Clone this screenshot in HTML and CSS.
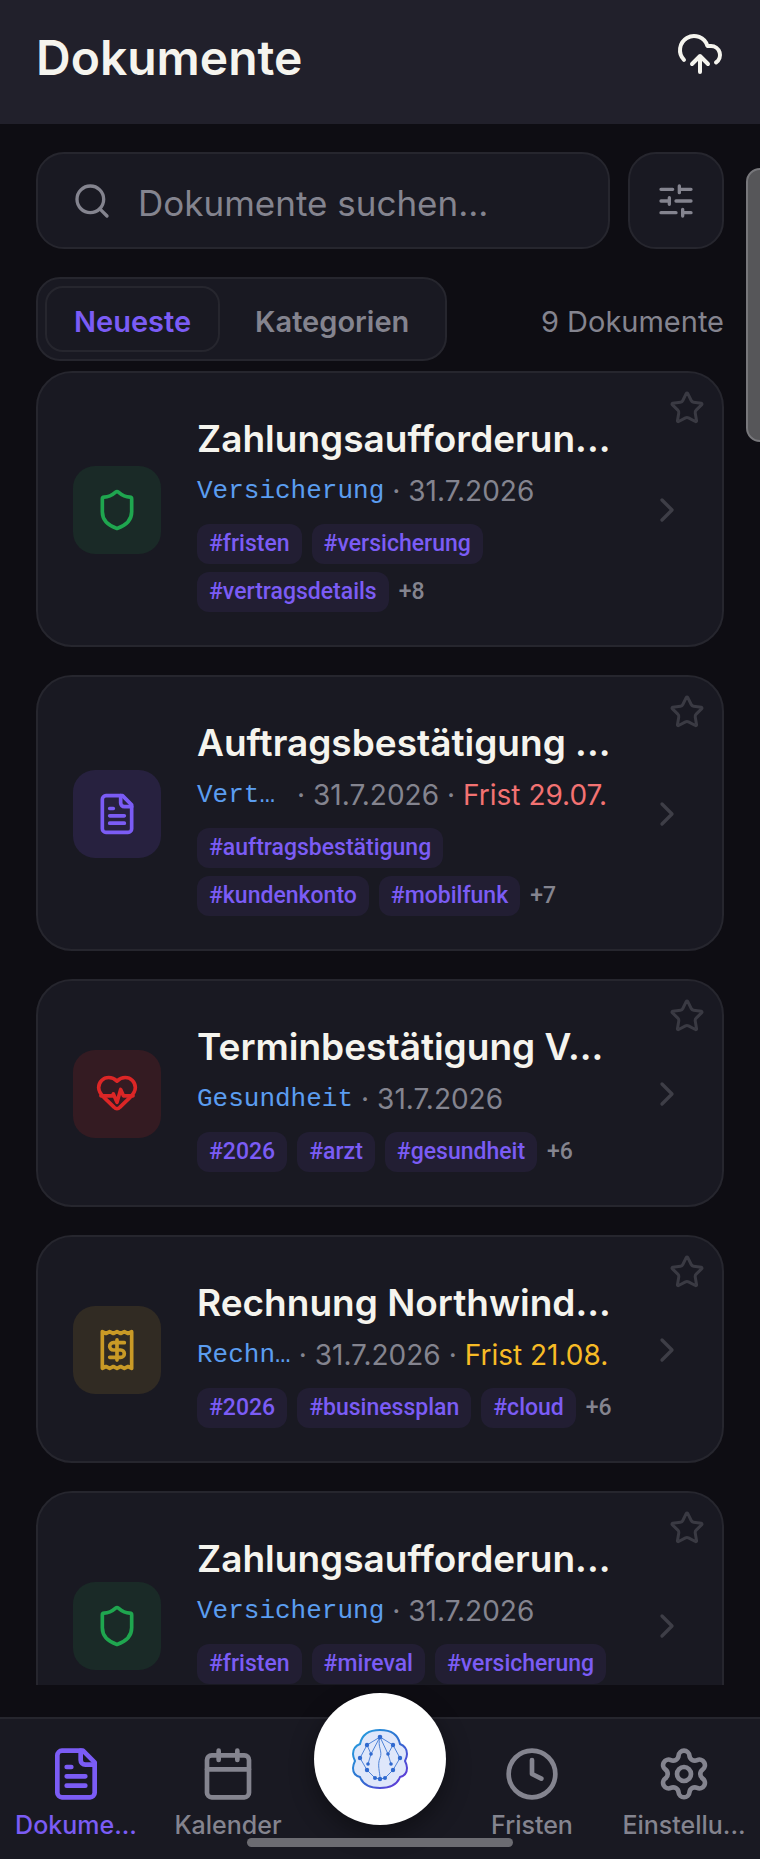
FILE: index.html
```html
<!DOCTYPE html>
<html lang="de">

<head>
  <meta charset="utf-8">
  <meta name="viewport" content="width=device-width, initial-scale=1">
  <title>Dokumente</title>
  <link rel="stylesheet" href="styles.css">
</head>

<body>
  <!-- shared icons -->
  <svg class="sprite" aria-hidden="true">
    <symbol id="star" viewBox="0 0 24 24">
      <path d="M11.525 2.295a.53.53 0 0 1 .95 0l2.31 4.679a2.123 2.123 0 0 0 1.595 1.16l5.166.756a.53.53 0 0 1 .294.904l-3.736 3.638a2.123 2.123 0 0 0-.611 1.878l.882 5.14a.53.53 0 0 1-.771.56l-4.618-2.428a2.122 2.122 0 0 0-1.973 0L6.396 21.01a.53.53 0 0 1-.77-.56l.881-5.139a2.122 2.122 0 0 0-.611-1.879L2.16 9.795a.53.53 0 0 1 .294-.906l5.165-.755a2.122 2.122 0 0 0 1.597-1.16z" />
    </symbol>
    <symbol id="chevron" viewBox="0 0 24 24">
      <path d="m9 18 6-6-6-6" />
    </symbol>
    <symbol id="shield" viewBox="0 0 24 24">
      <path d="M20 13c0 5-3.5 7.5-7.66 8.95a1 1 0 0 1-.67-.01C7.5 20.5 4 18 4 13V6a1 1 0 0 1 1-1c2 0 4.500-1.200 6.240-2.720a1.170 1.170 0 0 1 1.520 0C14.510 3.810 17 5 19 5a1 1 0 0 1 1 1z" />
    </symbol>
    <symbol id="file" viewBox="0 0 24 24">
      <path d="M15 2H6a2 2 0 0 0-2 2v16a2 2 0 0 0 2 2h12a2 2 0 0 0 2-2V7Z" />
      <path d="M14 2v4a2 2 0 0 0 2 2h4M10 9H8M16 13H8M16 17H8" />
    </symbol>
  </svg>

  <header class="topbar">
    <h1>Dokumente</h1>
    <button class="upload" type="button" aria-label="Hochladen">
      <svg class="icon" viewBox="0 0 24 24">
        <path d="M12 13v8M4 14.899A7 7 0 1 1 15.710 8h1.790a4.500 4.500 0 0 1 2.500 8.242M8 17l4-4 4 4" />
      </svg>
    </button>
  </header>

  <main>
    <div class="search-row">
      <label class="search" for="search">
        <svg class="icon" viewBox="0 0 24 24">
          <circle cx="11" cy="11" r="8" />
          <path d="m21 21-4.300-4.300" />
        </svg>
        <input id="search" type="text" placeholder="Dokumente suchen..." aria-label="Dokumente suchen">
      </label>
      <button class="filter" type="button" aria-label="Filter">
        <svg class="icon" viewBox="0 0 24 24">
          <path d="M21 5h-7M10 5H3M21 12h-9M8 12H3M21 19h-5M12 19H3M14 3v4M8 10v4M16 17v4" />
        </svg>
      </button>
    </div>

    <div class="view-row">
      <div class="tabs">
        <button class="tab active" type="button">Neueste</button>
        <button class="tab" type="button">Kategorien</button>
      </div>
      <span class="count">9 Dokumente</span>
    </div>

    <div class="list">
      <article class="card">
        <div class="tile green"><svg class="icon"><use href="#shield" /></svg></div>
        <div class="info">
          <h2>Zahlungsaufforderun...</h2>
          <div class="meta">
            <span class="category">Versicherung</span><span>·</span><span>31.7.2026</span>
          </div>
          <div class="tags">
            <span class="tag">#fristen</span>
            <span class="tag">#versicherung</span>
            <span class="tag">#vertragsdetails</span>
            <span class="more">+8</span>
          </div>
        </div>
        <svg class="icon chevron"><use href="#chevron" /></svg>
        <button class="star" type="button" aria-label="Favorit"><svg class="icon"><use href="#star" /></svg></button>
      </article>

      <article class="card">
        <div class="tile purple"><svg class="icon"><use href="#file" /></svg></div>
        <div class="info">
          <h2>Auftragsbestätigung ...</h2>
          <div class="meta">
            <span class="category">Vert…</span><span>·</span><span>31.7.2026</span><span>·</span><span class="overdue">Frist 29.07.</span>
          </div>
          <div class="tags">
            <span class="tag">#auftragsbestätigung</span>
            <span class="tag">#kundenkonto</span>
            <span class="tag">#mobilfunk</span>
            <span class="more">+7</span>
          </div>
        </div>
        <svg class="icon chevron"><use href="#chevron" /></svg>
        <button class="star" type="button" aria-label="Favorit"><svg class="icon"><use href="#star" /></svg></button>
      </article>

      <article class="card">
        <div class="tile red">
          <svg class="icon" viewBox="0 0 24 24">
            <path d="M19 14c1.490-1.460 3-3.210 3-5.500A5.500 5.500 0 0 0 16.500 3c-1.760 0-3 .5-4.500 2-1.500-1.500-2.740-2-4.500-2A5.500 5.500 0 0 0 2 8.500c0 2.300 1.500 4.050 3 5.500l5.500 5.300a2 2 0 0 0 3 0Z" />
            <path d="M3.220 13H9.500l.5-1 2 4.500 2-7 1.500 3.500h5.270" />
          </svg>
        </div>
        <div class="info">
          <h2>Terminbestätigung V...</h2>
          <div class="meta">
            <span class="category">Gesundheit</span><span>·</span><span>31.7.2026</span>
          </div>
          <div class="tags">
            <span class="tag">#2026</span>
            <span class="tag">#arzt</span>
            <span class="tag">#gesundheit</span>
            <span class="more">+6</span>
          </div>
        </div>
        <svg class="icon chevron"><use href="#chevron" /></svg>
        <button class="star" type="button" aria-label="Favorit"><svg class="icon"><use href="#star" /></svg></button>
      </article>

      <article class="card">
        <div class="tile yellow">
          <svg class="icon" viewBox="0 0 24 24">
            <path d="M4 2v20l2-1 2 1 2-1 2 1 2-1 2 1 2-1 2 1V2l-2 1-2-1-2 1-2-1-2 1-2-1-2 1Z" />
            <path d="M16 8h-6a2 2 0 1 0 0 4h4a2 2 0 1 1 0 4H8M12 17.500v-11" />
          </svg>
        </div>
        <div class="info">
          <h2>Rechnung Northwind...</h2>
          <div class="meta">
            <span class="category">Rechn…</span><span>·</span><span>31.7.2026</span><span>·</span><span class="due">Frist 21.08.</span>
          </div>
          <div class="tags">
            <span class="tag">#2026</span>
            <span class="tag">#businessplan</span>
            <span class="tag">#cloud</span>
            <span class="more">+6</span>
          </div>
        </div>
        <svg class="icon chevron"><use href="#chevron" /></svg>
        <button class="star" type="button" aria-label="Favorit"><svg class="icon"><use href="#star" /></svg></button>
      </article>

      <article class="card">
        <div class="tile green"><svg class="icon"><use href="#shield" /></svg></div>
        <div class="info">
          <h2>Zahlungsaufforderun...</h2>
          <div class="meta">
            <span class="category">Versicherung</span><span>·</span><span>31.7.2026</span>
          </div>
          <div class="tags">
            <span class="tag">#fristen</span>
            <span class="tag">#mireval</span>
            <span class="tag">#versicherung</span>
            <span class="more">+8</span>
          </div>
        </div>
        <svg class="icon chevron"><use href="#chevron" /></svg>
        <button class="star" type="button" aria-label="Favorit"><svg class="icon"><use href="#star" /></svg></button>
      </article>
    </div>
  </main>

  <nav class="bottom-nav">
    <a class="active" href="#dokumente">
      <svg class="icon"><use href="#file" /></svg>
      <span>Dokume...</span>
    </a>
    <a href="#kalender">
      <svg class="icon" viewBox="0 0 24 24">
        <path d="M8 2v4M16 2v4M3 10h18" />
        <rect x="3" y="4" width="18" height="18" rx="2" />
      </svg>
      <span>Kalender</span>
    </a>
    <button class="assistant" type="button" aria-label="Assistent">
      <svg viewBox="0 0 56 60">
        <defs>
          <linearGradient id="brain" x1="0" y1="0" x2="1" y2="1">
            <stop offset="0" stop-color="#25a5e0" />
            <stop offset="0.5" stop-color="#2f6fd0" />
            <stop offset="1" stop-color="#6a2fd8" />
          </linearGradient>
        </defs>
        <path d="M8 15C10 5 18 1 28 1s18 4 20 14c5 2 7 6 7 10 0 3-1 5-2 7 1 2 2 4 2 7 0 5-3 8-7 9-3 8-10 11-20 11S11 56 8 48c-4-1-7-4-7-9 0-3 1-5 2-7-1-2-2-4-2-7 0-4 2-8 7-10Z" fill="#dfe7fa" stroke="url(#brain)" stroke-width="2" />
        <path d="M28 8 15 16 8 29 15 41 23 49 28 50 33 49 41 41 48 29 41 16 28 8 19 25 16 35M15 16l4 9M28 8l8 17 3 10M41 16l-5 9M28 8c-3 10 3 14 0 21s0 14 0 21" fill="none" stroke="#5084d8" stroke-width="1" />
        <g fill="#2f69cf">
          <circle cx="28" cy="8" r="2.300" />
          <circle cx="15" cy="16" r="2.200" />
          <circle cx="41" cy="16" r="2.200" />
          <circle cx="19" cy="25" r="1.800" />
          <circle cx="36" cy="25" r="1.800" />
          <circle cx="8" cy="29" r="2.200" />
          <circle cx="48" cy="29" r="2.200" />
          <circle cx="16" cy="35" r="1.800" />
          <circle cx="39" cy="35" r="1.800" />
          <circle cx="15" cy="41" r="2.200" />
          <circle cx="41" cy="41" r="2.200" />
          <circle cx="23" cy="49" r="2" />
          <circle cx="28" cy="50" r="2.200" />
          <circle cx="33" cy="49" r="2" />
        </g>
      </svg>
    </button>
    <a href="#fristen">
      <svg class="icon" viewBox="0 0 24 24">
        <circle cx="12" cy="12" r="10" />
        <path d="M12 6v6l4 2" />
      </svg>
      <span>Fristen</span>
    </a>
    <a href="#einstellungen">
      <svg class="icon" viewBox="0 0 24 24">
        <path d="M9.671 4.136a2.340 2.340 0 0 1 4.659 0 2.340 2.340 0 0 0 3.319 1.915 2.340 2.340 0 0 1 2.330 4.033 2.340 2.340 0 0 0 0 3.831 2.340 2.340 0 0 1-2.330 4.033 2.340 2.340 0 0 0-3.319 1.915 2.340 2.340 0 0 1-4.659 0 2.340 2.340 0 0 0-3.320-1.915 2.340 2.340 0 0 1-2.330-4.033 2.340 2.340 0 0 0 0-3.831A2.340 2.340 0 0 1 6.350 6.051a2.340 2.340 0 0 0 3.319-1.915" />
        <circle cx="12" cy="12" r="3" />
      </svg>
      <span>Einstellu...</span>
    </a>
  </nav>

  <div class="scroll-thumb"></div>
  <div class="home-bar"></div>
</body>

</html>
```

FILE: styles.css
```css
* {
  box-sizing: border-box;
}

body {
  margin: 0;
  height: 100vh;
  display: flex;
  flex-direction: column;
  position: relative;
  overflow: hidden;
  background-color: #0e0d13;
  color: #f5f4ee;
  font-family: Inter, "Open Sans", sans-serif;
}

h1,
h2 {
  margin: 0;
  white-space: nowrap;
}

button {
  margin: 0;
  padding: 0;
  border: none;
  background: none;
  color: inherit;
  font-family: inherit;
  cursor: pointer;
}

.sprite {
  position: absolute;
  width: 0;
  height: 0;
}

.icon {
  display: block;
  flex: none;
  width: 40px;
  height: 40px;
  fill: none;
  stroke: currentColor;
  stroke-width: 2;
  stroke-linecap: round;
  stroke-linejoin: round;
}

/* header */
.topbar {
  flex: none;
  display: flex;
  justify-content: space-between;
  align-items: center;
  height: 124px;
  padding: 0 36px 16px;
  background-color: #21202b;
}

.topbar h1 {
  padding-top: 8px;
  font-size: 48px;
  line-height: 56px;
  font-weight: 600;
}

.upload .icon {
  width: 48px;
  height: 48px;
}

main {
  flex: 1;
  min-height: 0;
  display: flex;
  flex-direction: column;
  padding: 28px 36px 32px;
}

/* search */
.search-row {
  flex: none;
  display: flex;
  gap: 18px;
}

.search,
.filter,
.tabs,
.card {
  background-color: #191922;
  border: 2px solid #26262e;
}

.search {
  flex: 1;
  min-width: 0;
  display: flex;
  align-items: center;
  gap: 26px;
  height: 97px;
  padding: 0 34px;
  border-radius: 28px;
  color: #84848f;
}

.search input {
  flex: 1;
  min-width: 0;
  padding: 4px 0 0;
  border: none;
  outline: none;
  background: none;
  color: #f5f4ee;
  font-family: inherit;
  font-size: 35px;
  line-height: 44px;
}

.search input::placeholder {
  color: #84848f;
  opacity: 1;
}

.filter {
  display: flex;
  justify-content: center;
  align-items: center;
  width: 96px;
  border-radius: 28px;
  color: #84848f;
}

/* tabs */
.view-row {
  flex: none;
  display: flex;
  justify-content: space-between;
  align-items: center;
  margin: 28px 0 10px;
}

.tabs {
  display: flex;
  gap: 6px;
  padding: 7px;
  border-radius: 24px;
}

.tab {
  height: 66px;
  padding: 4px 27px 0;
  border: 2px solid transparent;
  border-radius: 18px;
  color: #84848f;
  font-size: 29px;
  font-weight: 600;
}

.tab.active {
  border-color: #26262e;
  color: #7b5cf5;
}

.count {
  padding-top: 4px;
  color: #84848f;
  font-size: 29px;
}

/* document cards */
.list {
  flex: 1;
  min-height: 0;
  display: flex;
  flex-direction: column;
  gap: 28px;
  overflow: hidden;
}

.card {
  flex: none;
  position: relative;
  display: flex;
  align-items: center;
  padding: 34px 35px 33px;
  border-radius: 36px;
}

.tile {
  flex: none;
  display: flex;
  justify-content: center;
  align-items: center;
  width: 88px;
  height: 88px;
  margin-right: 36px;
  border-radius: 22px;
}

.tile .icon {
  width: 44px;
  height: 44px;
}

.green {
  background-color: #1a2a27;
  color: #1fa64f;
}

.purple {
  background-color: #27213f;
  color: #7b5cf5;
}

.red {
  background-color: #341b22;
  color: #dc2626;
}

.yellow {
  background-color: #312b23;
  color: #c99a26;
}

.info {
  flex: 1;
  min-width: 0;
}

.info h2 {
  font-size: 37px;
  line-height: 64px;
  font-weight: 600;
}

.meta {
  display: flex;
  gap: 8px;
  color: #84848f;
  font-size: 28px;
  line-height: 40px;
  white-space: nowrap;
}

.category {
  min-width: 92px;
  color: #5b9df0;
  font-family: "Liberation Mono", monospace;
  font-size: 26px;
}

.overdue {
  color: #f37272;
}

.due {
  color: #f7bb26;
}

.tags {
  display: flex;
  flex-wrap: wrap;
  align-items: center;
  gap: 8px 10px;
  margin-top: 13px;
  font-family: Roboto, sans-serif;
  font-size: 23px;
  font-weight: 500;
}

.tag {
  padding: 0 12px;
  border-radius: 12px;
  background-color: #221e33;
  color: #7b5cf5;
  line-height: 40px;
}

.more {
  color: #84848f;
  line-height: 32px;
}

.chevron {
  margin-left: 30px;
  color: #3e3e47;
}

.star {
  position: absolute;
  top: 17px;
  right: 17px;
  color: #3a3a43;
}

.star .icon {
  width: 36px;
  height: 36px;
}

/* bottom navigation */
.bottom-nav {
  flex: none;
  display: grid;
  grid-template-columns: repeat(5, 1fr);
  height: 142px;
  border-top: 2px solid #26262e;
  background-color: #191922;
}

.bottom-nav a {
  display: flex;
  flex-direction: column;
  align-items: center;
  gap: 6px;
  padding-top: 27px;
  color: #84848f;
  font-size: 25px;
  line-height: 34px;
  font-weight: 500;
  text-decoration: none;
  white-space: nowrap;
}

.bottom-nav a.active {
  color: #7b5cf5;
}

.bottom-nav .icon {
  width: 56px;
  height: 56px;
}

.assistant {
  justify-self: center;
  display: flex;
  justify-content: center;
  align-items: center;
  width: 132px;
  height: 132px;
  margin-top: -26px;
  border-radius: 50%;
  background-color: #fff;
  box-shadow: 0 8px 24px rgba(0, 0, 0, 0.4);
}

.assistant svg {
  width: 56px;
  height: 60px;
}

/* overlays */
.scroll-thumb {
  position: absolute;
  top: 168px;
  right: -14px;
  width: 28px;
  height: 274px;
  border: 2px solid #77777b;
  border-radius: 14px;
  background-color: #565659;
}

.home-bar {
  position: absolute;
  bottom: 12px;
  left: 50%;
  width: 266px;
  height: 9px;
  margin-left: -133px;
  border-radius: 5px;
  background-color: #6c6c72;
}
```
